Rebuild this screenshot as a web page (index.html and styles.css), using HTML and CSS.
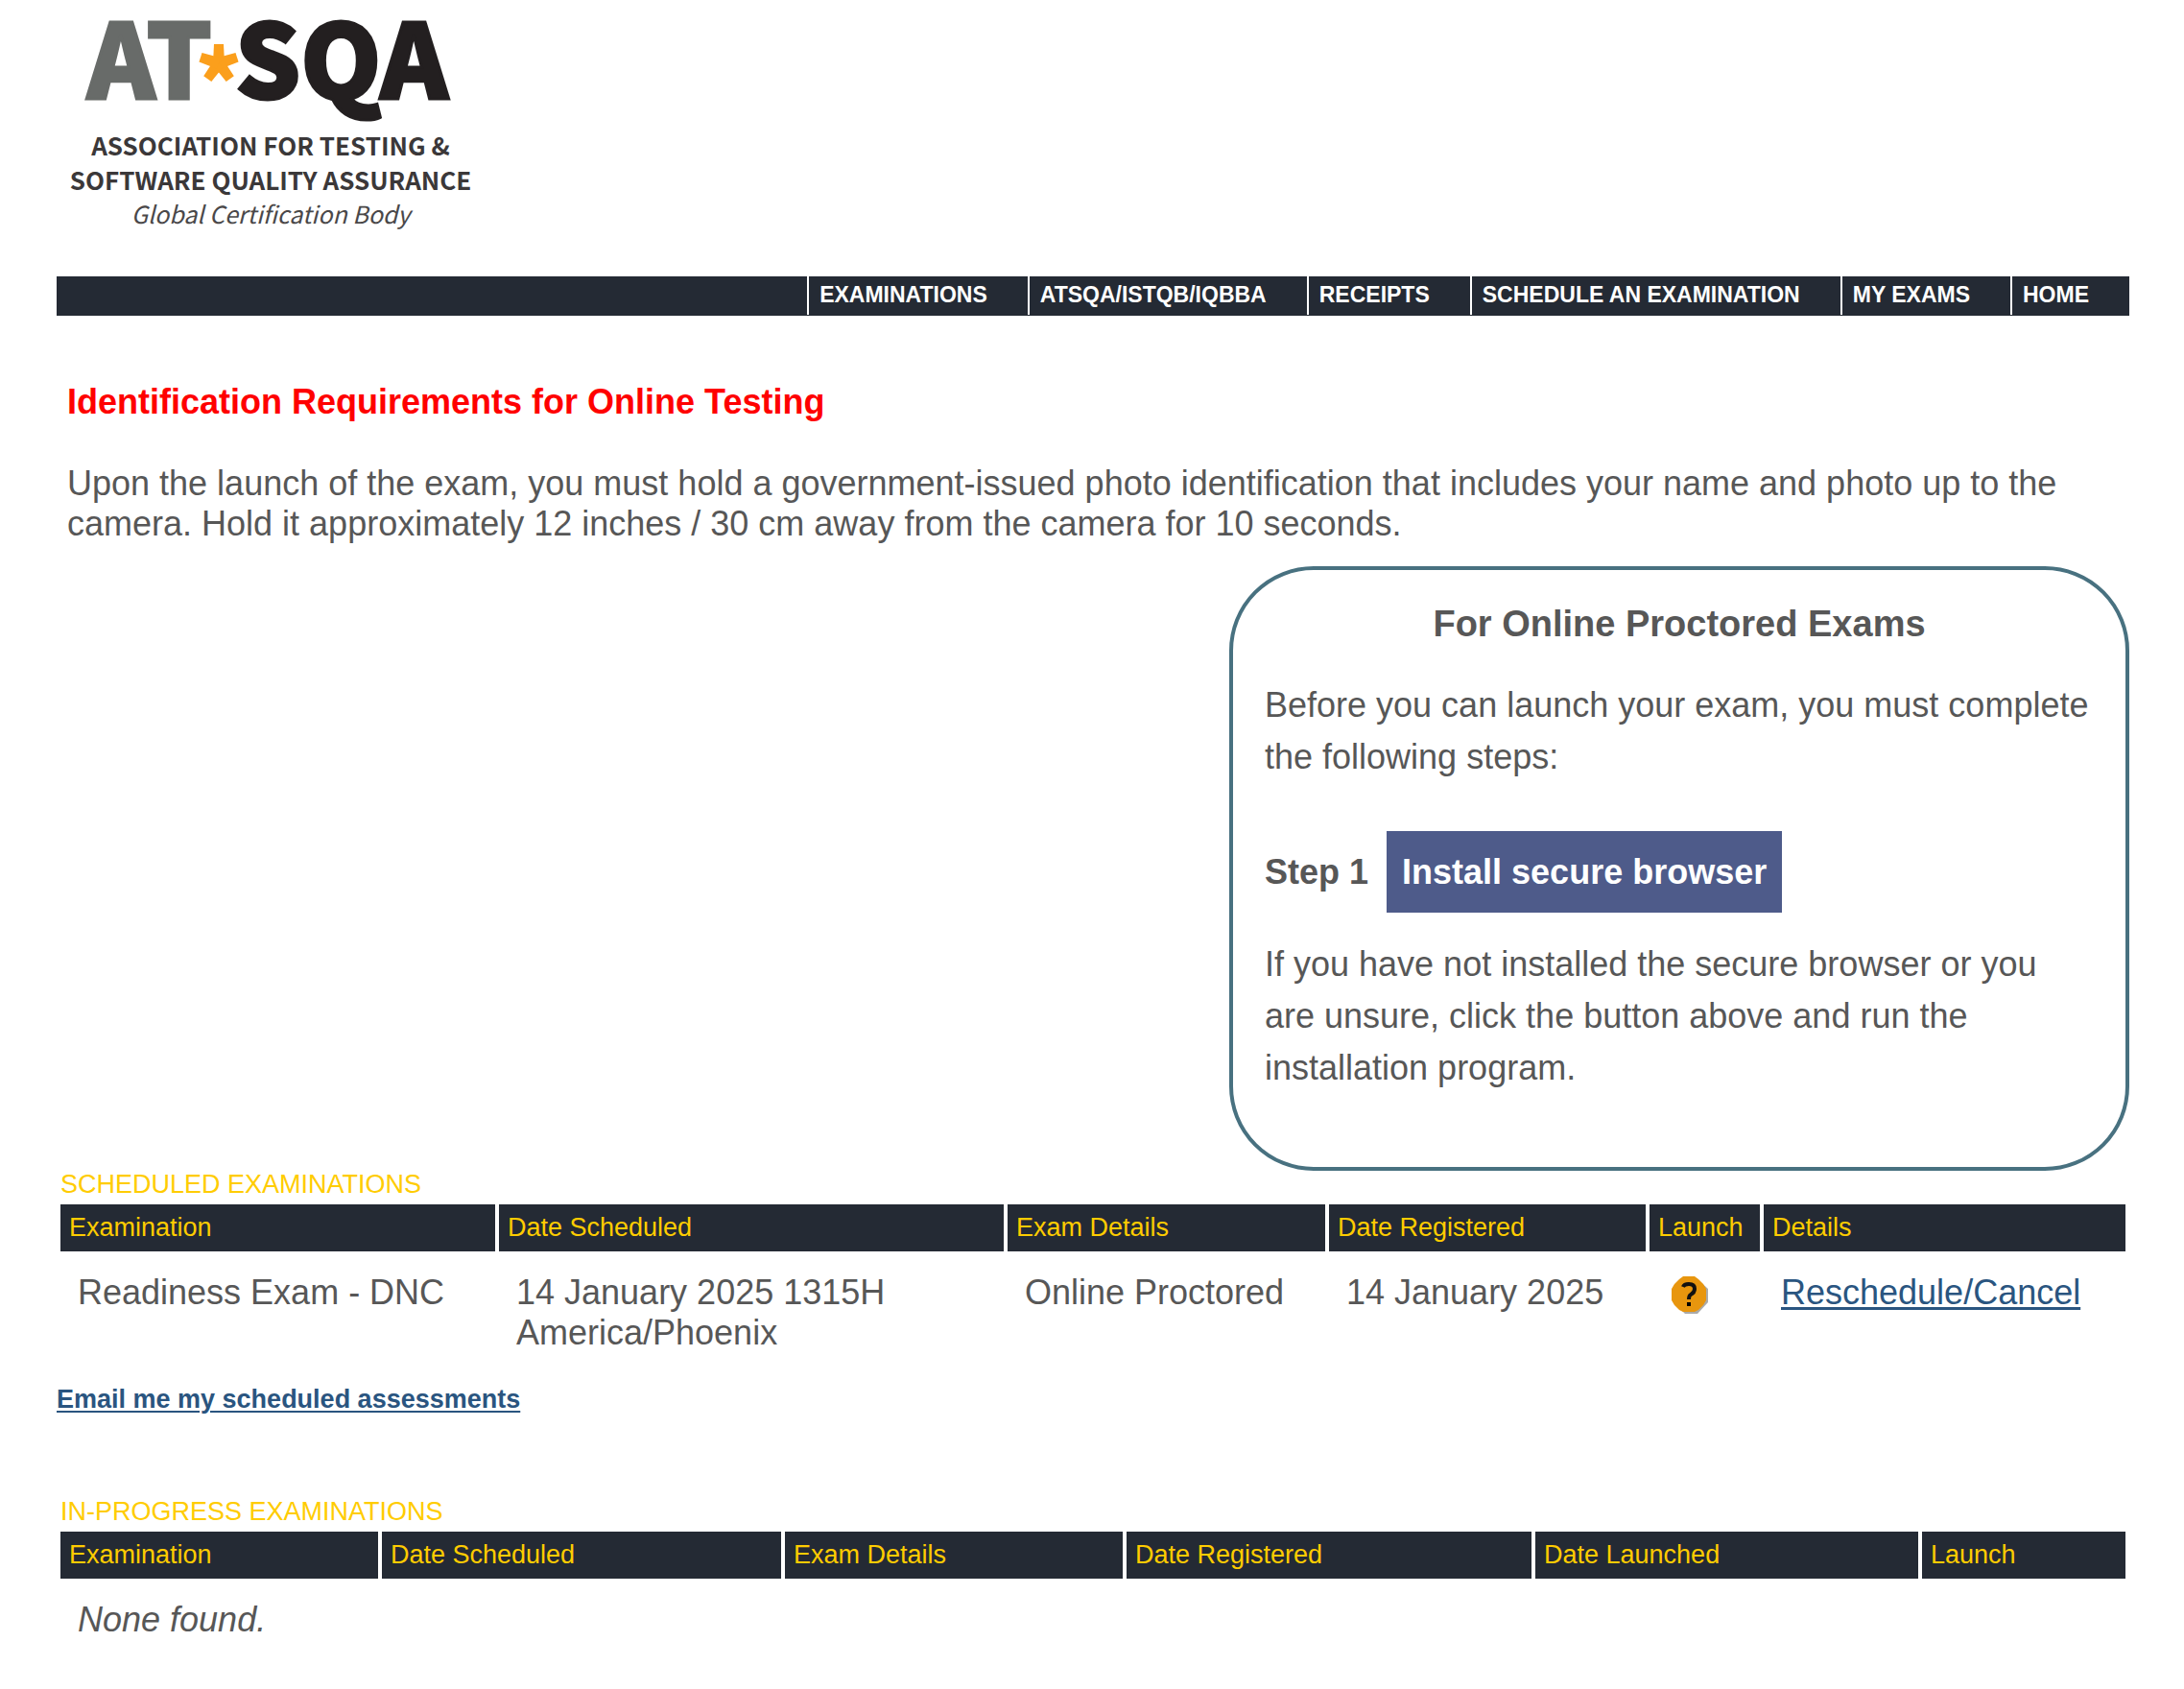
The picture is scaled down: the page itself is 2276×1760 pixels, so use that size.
FILE: index.html
```html
<!DOCTYPE html>
<html lang="en">
<head>
<meta charset="utf-8">
<title>AT*SQA - My Exams</title>
<link rel="stylesheet" href="styles.css">
</head>
<body>
<div class="page">
  <header class="masthead">
    <svg class="logo" width="440" height="248" viewBox="0 0 440 248" role="img" aria-label="AT*SQA">
      <text class="logo-at" x="32" y="103">AT</text>
      <g class="logo-star" transform="translate(169 66)">
        <path id="ray" d="M-5-20H5L6 0H-6Z"/>
        <use href="#ray" transform="rotate(72)"/>
        <use href="#ray" transform="rotate(144)"/>
        <use href="#ray" transform="rotate(216)"/>
        <use href="#ray" transform="rotate(288)"/>
      </g>
      <text class="logo-sqa" x="186" y="103">SQA</text>
      <text class="logo-line" x="223" y="162">ASSOCIATION FOR TESTING &amp;</text>
      <text class="logo-line" x="223" y="198">SOFTWARE QUALITY ASSURANCE</text>
      <text class="logo-tag" x="223" y="233">Global Certification Body</text>
    </svg>
  </header>
  <nav class="menu">
    <a href="#">EXAMINATIONS</a>
    <a href="#">ATSQA/ISTQB/IQBBA</a>
    <a href="#">RECEIPTS</a>
    <a href="#">SCHEDULE AN EXAMINATION</a>
    <a href="#">MY EXAMS</a>
    <a href="#">HOME</a>
  </nav>
  <main>
    <section class="notice">
      <h1>Identification Requirements for Online Testing</h1>
      <p>Upon the launch of the exam, you must hold a government-issued photo identification that includes your name and photo up to the camera. Hold it approximately 12 inches / 30 cm away from the camera for 10 seconds.</p>
    </section>
    <section class="proctored">
      <h2>For Online Proctored Exams</h2>
      <p>Before you can launch your exam, you must complete the following steps:</p>
      <div class="step"><strong>Step 1</strong><button type="button">Install secure browser</button></div>
      <p>If you have not installed the secure browser or you are unsure, click the button above and run the installation program.</p>
    </section>
    <table class="exams">
      <caption>SCHEDULED EXAMINATIONS</caption>
      <colgroup><col class="s1"><col class="s2"><col class="s3"><col class="s4"><col class="s5"><col class="s6"></colgroup>
      <thead>
        <tr><th>Examination</th><th>Date Scheduled</th><th>Exam Details</th><th>Date Registered</th><th>Launch</th><th>Details</th></tr>
      </thead>
      <tbody>
        <tr>
          <td>Readiness Exam - DNC</td>
          <td>14 January 2025 1315H<br>America/Phoenix</td>
          <td>Online Proctored</td>
          <td>14 January 2025</td>
          <td class="launch"><a href="#" aria-label="Launch help"><svg width="40" height="40" viewBox="0 0 40 40">
            <path class="help-shadow" d="M14 3h14l11 10v14L28 39H15L4 28V14z"/>
            <path class="help-disc" d="M13 0h12l4 3 5 5 3 5v12l-3 5-5 5-4 2H13l-4-2-5-5-3-5V13l3-5 5-5z"/>
            <path class="help-mark" d="M13 11q1-3 6-3 6 0 6 5 0 4-4 6-2 1-2 5"/>
            <rect x="17" y="27" width="4" height="4"/>
          </svg></a></td>
          <td><a href="#">Reschedule/Cancel</a></td>
        </tr>
      </tbody>
    </table>
    <p class="email"><a href="#">Email me my scheduled assessments</a></p>
    <table class="exams">
      <caption>IN-PROGRESS EXAMINATIONS</caption>
      <colgroup><col class="p1"><col class="p2"><col class="p3"><col class="p4"><col class="p5"><col class="p6"></colgroup>
      <thead>
        <tr><th>Examination</th><th>Date Scheduled</th><th>Exam Details</th><th>Date Registered</th><th>Date Launched</th><th>Launch</th></tr>
      </thead>
      <tbody>
        <tr><td colspan="6"><em>None found.</em></td></tr>
      </tbody>
    </table>
  </main>
</div>
</body>
</html>
```
FILE: styles.css
```css
* { box-sizing: border-box; }
body {
  margin: 0;
  background: #fff;
  color: #575757;
  font: 36px/42px "Liberation Sans", Arial, sans-serif;
}
h1, h2, p { margin: 0; font-size: 36px; }
a { color: #2a5580; text-decoration-thickness: 3px; text-underline-offset: 3px; }
.page { padding: 0 57px 38px 59px; }

.masthead { height: 288px; }
.logo {
  display: block;
  overflow: visible;
  font-family: "Noto Sans CJK JP", "Noto Sans", sans-serif;
}
.logo-at, .logo-sqa { font-size: 107px; font-weight: 900; stroke-width: 3px; }
.logo-at { fill: #686b69; stroke: #686b69; }
.logo-sqa { fill: #231f20; stroke: #231f20; }
.logo-star { fill: #fb9f1c; }
.logo-line { font-size: 26px; font-weight: 700; fill: #3b3839; text-anchor: middle; }
.logo-tag { font-size: 25px; font-style: italic; fill: #4a4849; text-anchor: middle; }

.menu {
  display: flex;
  justify-content: flex-end;
  padding-bottom: 1px;
  background: #242a34;
}
.menu a {
  padding: 0 42px 2px 11px;
  border-left: 2px solid #fff;
  color: #fff;
  font-size: 23px;
  font-weight: bold;
  line-height: 38px;
  text-decoration: none;
}

.notice { padding: 69px 11px 0; }
.notice h1 { margin-bottom: 43px; color: #f00; }

.proctored {
  width: 938px;
  max-width: 100%;
  margin: 23px 0 0 auto;
  padding: 29px 33px 76px;
  border: 4px solid #487180;
  border-radius: 88px;
  line-height: 54px;
}
.proctored h2 { margin-bottom: 31px; font-size: 38px; text-align: center; }
.step { display: flex; align-items: center; gap: 19px; margin: 50px 0 27px; }
.step button {
  height: 85px;
  padding: 0 16px;
  border: 0;
  background: #4e5b8a;
  color: #fff;
  font: bold 36px/54px "Liberation Sans", Arial, sans-serif;
}

.exams { width: 100%; table-layout: fixed; border-spacing: 4px; }
.exams caption {
  padding: 0 4px 3px;
  color: #fc0;
  font-size: 27px;
  line-height: 28px;
  text-align: left;
}
.exams th {
  padding: 8px 9px 9px;
  background: #242a34;
  color: #fc0;
  font-size: 27px;
  font-weight: normal;
  line-height: 32px;
  text-align: left;
}
.exams td { padding: 18px; vertical-align: top; }
.exams .launch { padding: 22px; }
.launch svg { display: block; }
.help-shadow { fill: #aaa; }
.help-disc { fill: #e8960e; }
.help-mark { fill: none; stroke: #111; stroke-width: 4; }
.s1 { width: 453px; } .s2 { width: 526px; } .s3 { width: 331px; }
.s4 { width: 330px; } .s5 { width: 115px; } .s6 { width: 377px; }
.p1 { width: 331px; } .p2 { width: 416px; } .p3 { width: 352px; }
.p4 { width: 422px; } .p5 { width: 399px; } .p6 { width: 212px; }

.email { margin: 10px 0 87px; font-size: 27px; font-weight: bold; line-height: 32px; }
.email a { text-decoration-thickness: 2px; }
```
